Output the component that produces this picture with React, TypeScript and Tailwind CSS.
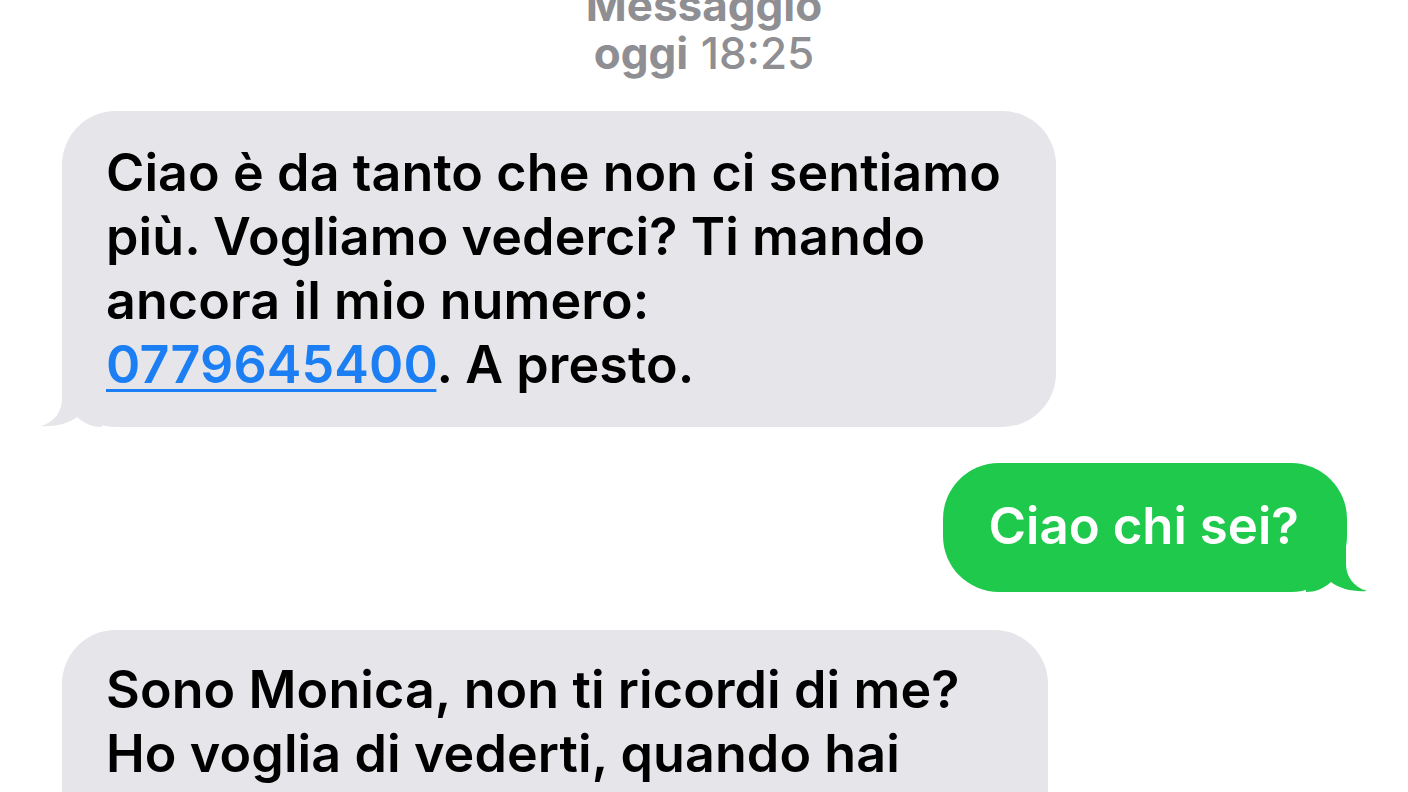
import React from 'react';

function LeftTail() {
  return (
    <svg className="absolute bottom-0 left-[-22px] h-[50px] w-[62px]" viewBox="0 0 62 50">
      <path d="M22 0 L22 22 C22 34 15 45 1 49 C14 50 28 47 37 40 C45 47 53 50 62 50 L62 0 Z" fill="#e5e5ea" />
    </svg>
  );
}

function RightTail() {
  return (
    <svg className="absolute bottom-0 right-[-21px] h-[50px] w-[62px]" viewBox="0 0 62 50">
      <path d="M40 0 L40 22 C40 34 47 45 61 49 C48 50 34 47 25 40 C17 47 9 50 0 50 L0 0 Z" fill="#1ec94c" />
    </svg>
  );
}

export default function App() {
  return (
    <div className="h-[792px] w-full overflow-hidden bg-white font-['Inter',sans-serif]">
      <div className="flex flex-col">
        {/* Header */}
        <div className="-mt-[19px] flex flex-col items-center text-[44px] leading-[48px] text-[#8e8e93]">
          <div className="font-bold">Messaggio</div>
          <div>
            <span className="font-bold">oggi</span> <span className="font-medium">18:25</span>
          </div>
        </div>

        {/* Incoming 1 */}
        <div className="relative ml-[62px] mt-[34px] w-[994px] rounded-[54px] bg-[#e5e5ea] pb-[30px] pl-[44px] pt-[30px] text-[52px] font-semibold leading-[64px] tracking-[0.1px] text-black">
          <LeftTail />
          <div className="relative whitespace-nowrap">
            Ciao è da tanto che non ci sentiamo
            <br />
            più. Vogliamo vederci? Ti mando
            <br />
            ancora il mio numero:
            <br />
            <span className="text-[#1b7ff3] underline decoration-[3px] underline-offset-[6px]">0779645400</span>. A presto.
          </div>
        </div>

        {/* Outgoing */}
        <div className="relative ml-auto mr-[61px] mt-[36px] rounded-[56px] bg-[#1ec94c] pb-[34px] pl-[46px] pr-[48px] pt-[31px] text-[51px] font-semibold leading-[64px] text-white">
          <RightTail />
          <div className="relative whitespace-nowrap">Ciao chi sei?</div>
        </div>

        {/* Incoming 2 */}
        <div className="relative ml-[62px] mt-[38px] w-[986px] rounded-[54px] bg-[#e5e5ea] pb-[30px] pl-[44px] pt-[28px] text-[52px] font-semibold leading-[64px] tracking-[0.1px] text-black">
          <div className="relative whitespace-nowrap">
            Sono Monica, non ti ricordi di me?
            <br />
            Ho voglia di vederti, quando hai
            <br />
            tempo?
          </div>
        </div>
      </div>
    </div>
  );
}
